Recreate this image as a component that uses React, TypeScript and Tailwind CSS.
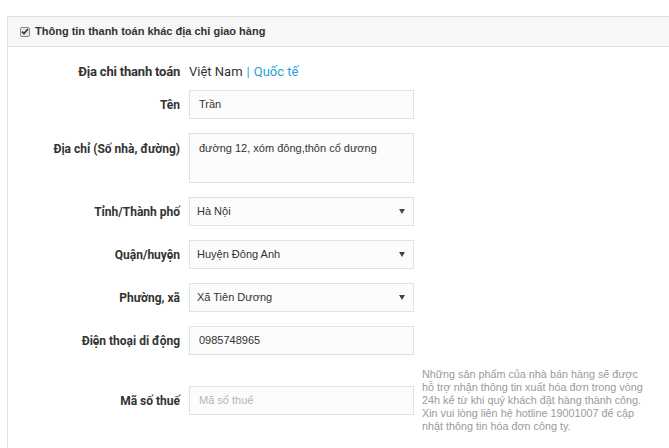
import React from "react";

const label =
  "w-[181px] shrink-0 pr-[9px] text-right font-['Roboto',sans-serif] text-[12px] font-bold text-[#333]";
const field =
  "w-[225px] h-[29px] border border-[#dfe3e4] bg-[#fcfcfc] px-[9px] text-[11px] text-[#333] flex items-center";

function Row({ name, children }: { name: string; children: React.ReactNode }) {
  return (
    <div className="flex items-center">
      <div className={label}>{name}</div>
      {children}
    </div>
  );
}

function Select({ value }: { value: string }) {
  return (
    <div className={`${field} justify-between pl-[7px] pr-[7px]`}>
      <span>{value}</span>
      <svg width="6" height="5" viewBox="0 0 6 5" className="mr-[1px]">
        <path d="M0 0h6L3 5z" fill="#444" />
      </svg>
    </div>
  );
}

export default function App() {
  return (
    <div className="h-[448px] w-[669px] overflow-hidden bg-white pt-[16px] pl-[7px] font-['Liberation_Sans',Arial,sans-serif]">
      <div className="w-[700px] border border-[#dde2e4] h-[460px]">
        {/* Header */}
        <div className="flex h-[30px] items-center gap-[5px] border-b border-[#dde2e4] bg-[#f7f7f7] pl-[12px]">
          <span className="flex h-[10px] w-[10px] items-center justify-center rounded-[2px] border border-[#8a8a8a] bg-[#e6e6e6]">
            <svg width="8" height="7" viewBox="0 0 8 7">
              <path d="M1 3.6l2 2L7 1" stroke="#333" strokeWidth="1.6" fill="none" />
            </svg>
          </span>
          <span className="text-[11px] font-bold text-[#333]">Thông tin thanh toán khác địa chỉ giao hàng</span>
        </div>

        {/* Body */}
        <div className="flex flex-col pt-[15px]">
          <div className="flex h-[20px] items-center font-['Roboto',sans-serif] text-[13px]">
            <div className="w-[181px] shrink-0 pr-[9px] text-right font-bold tracking-[-0.2px] text-[#333]">
              Địa chi thanh toán
            </div>
            <span className="text-[#333]">Việt Nam</span>
            <span className="mx-[4px] text-[#2a9fd6]">|</span>
            <span className="text-[#2a9fd6]">Quốc tế</span>
          </div>

          <div className="mt-[8px] flex flex-col gap-[14px]">
            <Row name="Tên">
              <div className={field}>Trần</div>
            </Row>
            <div className="flex items-start">
              <div className={`${label} pt-[7px]`}>Địa chỉ (Số nhà, đường)</div>
              <div className="w-[225px] h-[50px] border border-[#dfe3e4] bg-[#fcfcfc] px-[9px] pt-[6px] text-[11px] text-[#333]">
                đường 12, xóm đông,thôn cổ dương
              </div>
            </div>
            <Row name="Tỉnh/Thành phố">
              <Select value="Hà Nội" />
            </Row>
            <Row name="Quận/huyện">
              <Select value="Huyện Đông Anh" />
            </Row>
            <Row name="Phường, xã">
              <Select value="Xã Tiên Dương" />
            </Row>
            <Row name="Điện thoại di động">
              <div className={field}>0985748965</div>
            </Row>
          </div>

          <div className="mt-[13px] flex items-center">
            <div className={label}>Mã số thuế</div>
            <div className={`${field} text-[#b5b5b5]`}>Mã số thuế</div>
            <p className="ml-[8px] text-[10.8px] leading-[13px] text-[#9a9a9a]">
              Những sản phẩm của nhà bán hàng sẽ được
              <br />
              hỗ trợ nhận thông tin xuất hóa đơn trong vòng
              <br />
              24h kể từ khi quý khách đặt hàng thành công.
              <br />
              Xin vui lòng liên hệ hotline 19001007 để cập
              <br />
              nhật thông tin hóa đơn công ty.
            </p>
          </div>
        </div>
      </div>
    </div>
  );
}
